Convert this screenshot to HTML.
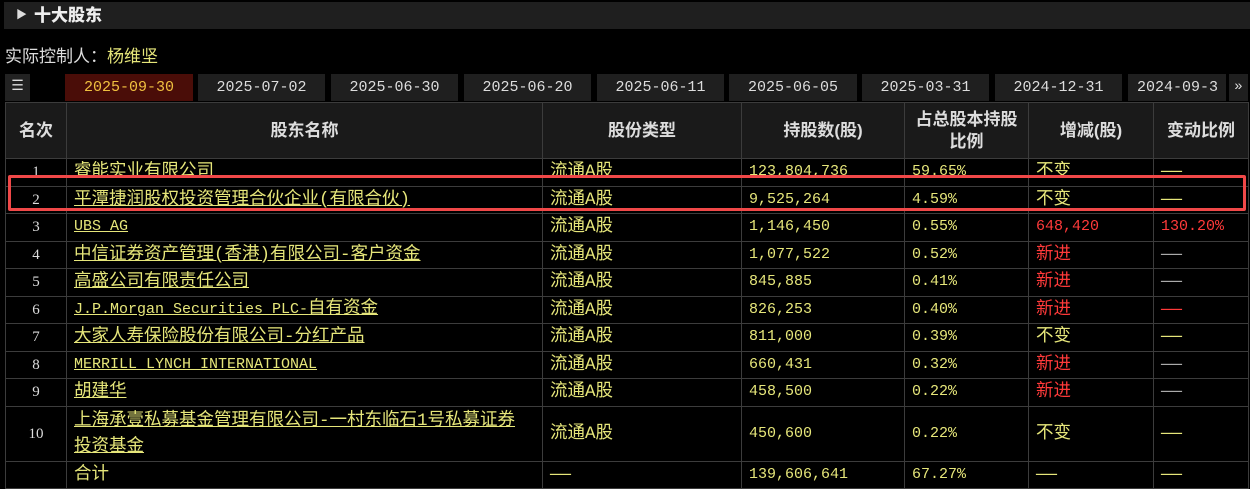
<!DOCTYPE html>
<html><head><meta charset="utf-8"><style>
body{margin:0;width:1250px;height:485px;background:#000;overflow:hidden;font-family:"Liberation Sans","Noto Sans CJK SC",sans-serif;color:#ddd;position:relative}
.hdr{position:absolute;left:4px;top:2px;width:1246px;height:27px;background:#1f1f1f;font-size:17px;font-weight:bold;color:#eee;line-height:27px}
.hdr span{position:absolute;left:12px;top:0;font-size:11px;color:#ddd}
.hdr b{position:absolute;left:30px}
.ctrl{position:absolute;left:5px;top:42px;font-size:17px;color:#ddd}
.ctrl em{font-style:normal;color:#e6e67a}
.tab{position:absolute;top:74px;height:27px;background:#1f1f1f;color:#ddd;font-family:"Liberation Mono",monospace;font-size:15px;line-height:27px;text-align:center}
.tab.on{background:#4a0d08;color:#f0c040}
table{position:absolute;left:5px;top:102px;border-collapse:collapse}
td{border:1px solid #3c3c3c;padding:0 0 0 7px;height:26.5px;line-height:20px;color:#e6e67a;font-family:"Liberation Mono","Noto Sans CJK SC",monospace;font-size:17.5px;white-space:nowrap;overflow:hidden}
td.m{font-size:15px}
th{border:1px solid #3c3c3c;background:#1a1a1a;color:#ddd;font-weight:bold;font-size:17px;height:53px;line-height:22px}
td.n{text-align:center;color:#ddd;padding:0;font-size:15px;font-family:"Liberation Serif",serif}
td.u{text-decoration:underline}
td.r{color:#ff3a3a}
td.g{color:#aaa}
.box{position:absolute;left:8px;top:175px;width:1232px;height:30px;border:3px solid #f04848;border-radius:2px}
</style></head><body>
<div class="hdr"><span>▶</span><b>十大股东</b></div>
<div class="ctrl">实际控制人：<em>杨维坚</em></div>
<div class="tab" style="left:5px;width:25px;font-size:14px;background:#222">☰</div>
<div class="tab on" style="left:65px;width:128px">2025-09-30</div>
<div class="tab" style="left:198px;width:127px">2025-07-02</div>
<div class="tab" style="left:331px;width:127px">2025-06-30</div>
<div class="tab" style="left:464px;width:127px">2025-06-20</div>
<div class="tab" style="left:597px;width:127px">2025-06-11</div>
<div class="tab" style="left:729px;width:128px">2025-06-05</div>
<div class="tab" style="left:862px;width:127px">2025-03-31</div>
<div class="tab" style="left:995px;width:127px">2024-12-31</div>
<div class="tab" style="left:1128px;width:98px;text-align:left;overflow:hidden">&nbsp;2024-09-3</div>
<div class="tab" style="left:1229px;width:19px;font-size:14px">»</div>
<table>
<colgroup><col style="width:61px"><col style="width:476px"><col style="width:199px"><col style="width:163px"><col style="width:124px"><col style="width:125px"><col style="width:95px"></colgroup>
<tr><th>名次</th><th>股东名称</th><th>股份类型</th><th>持股数(股)</th><th>占总股本持股<br>比例</th><th>增减(股)</th><th>变动比例</th></tr>
<tr><td class="n">1</td><td class="u">睿能实业有限公司</td><td>流通A股</td><td class="m">123,804,736</td><td class="m">59.65%</td><td>不变</td><td>——</td></tr>
<tr><td class="n">2</td><td class="u">平潭捷润股权投资管理合伙企业(有限合伙)</td><td>流通A股</td><td class="m">9,525,264</td><td class="m">4.59%</td><td>不变</td><td>——</td></tr>
<tr><td class="n">3</td><td class="u m">UBS AG</td><td>流通A股</td><td class="m">1,146,450</td><td class="m">0.55%</td><td class="r m">648,420</td><td class="r m">130.20%</td></tr>
<tr><td class="n">4</td><td class="u">中信证券资产管理(香港)有限公司-客户资金</td><td>流通A股</td><td class="m">1,077,522</td><td class="m">0.52%</td><td class="r">新进</td><td class="g">——</td></tr>
<tr><td class="n">5</td><td class="u">高盛公司有限责任公司</td><td>流通A股</td><td class="m">845,885</td><td class="m">0.41%</td><td class="r">新进</td><td class="g">——</td></tr>
<tr><td class="n">6</td><td class="u"><span style="font-size:15px">J.P.Morgan Securities PLC-</span>自有资金</td><td>流通A股</td><td class="m">826,253</td><td class="m">0.40%</td><td class="r">新进</td><td class="r">——</td></tr>
<tr><td class="n">7</td><td class="u">大家人寿保险股份有限公司-分红产品</td><td>流通A股</td><td class="m">811,000</td><td class="m">0.39%</td><td>不变</td><td>——</td></tr>
<tr><td class="n">8</td><td class="u m">MERRILL LYNCH INTERNATIONAL</td><td>流通A股</td><td class="m">660,431</td><td class="m">0.32%</td><td class="r">新进</td><td class="g">——</td></tr>
<tr><td class="n">9</td><td class="u">胡建华</td><td>流通A股</td><td class="m">458,500</td><td class="m">0.22%</td><td class="r">新进</td><td class="g">——</td></tr>
<tr><td class="n" style="height:54px">10</td><td class="u" style="line-height:26px">上海承壹私募基金管理有限公司-一村东临石1号私募证券<br>投资基金</td><td>流通A股</td><td class="m">450,600</td><td class="m">0.22%</td><td>不变</td><td>——</td></tr>
<tr><td class="n"></td><td>合计</td><td>——</td><td class="m">139,606,641</td><td class="m">67.27%</td><td>——</td><td>——</td></tr>
</table>
<div class="box"></div>
</body></html>
